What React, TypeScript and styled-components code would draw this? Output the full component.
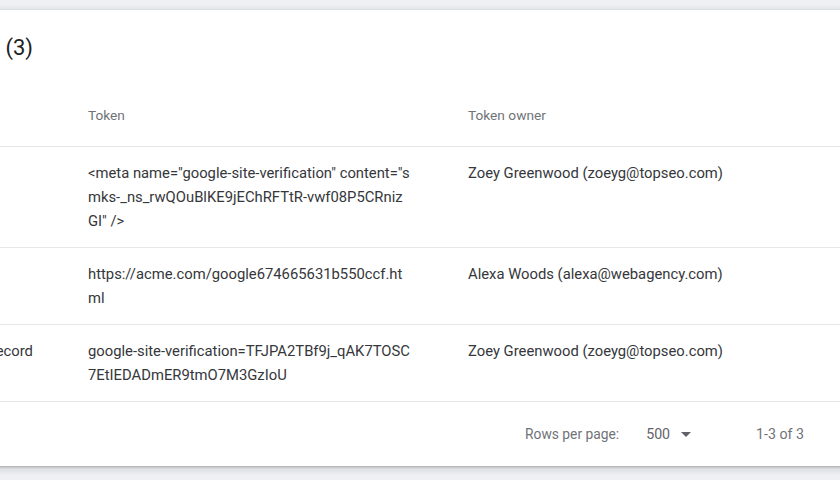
import React from "react";
import styled, { createGlobalStyle } from "styled-components";

const GlobalStyle = createGlobalStyle`
  html, body {
    margin: 0;
    padding: 0;
    background: #eef0f3;
    overflow: hidden;
    font-family: Roboto, "Liberation Sans", Arial, sans-serif;
  }
`;

const Page = styled.div`
  padding-top: 10px;
  height: 470px;
`;

const Card = styled.section`
  margin: 0 -40px 0 -96px;
  background: #fff;
  box-shadow: 0 1px 2px rgba(60, 64, 67, 0.3), 0 2px 6px 2px rgba(60, 64, 67, 0.15);
`;

const TitleBar = styled.div`
  width: 129px;
  display: flex;
  justify-content: flex-end;
  padding: 24px 0 20px;
  white-space: nowrap;
`;

const Title = styled.h2`
  margin: 0;
  font-size: 22px;
  line-height: 28px;
  font-weight: 400;
  color: #202124;
`;

const Row = styled.div<{ $head?: boolean }>`
  display: grid;
  grid-template-columns: 168px 380px 1fr;
  border-bottom: 1px solid #e6e7e8;
  padding: ${(p) => (p.$head ? "23px 0 21px" : "14px 0")};
  font-size: ${(p) => (p.$head ? "13.7px" : "14.8px")};
  line-height: ${(p) => (p.$head ? "20px" : "24px")};
  color: ${(p) => (p.$head ? "#6f7377" : "#35373b")};
`;

const MethodCell = styled.div`
  padding-left: 24px;
  white-space: nowrap;
`;

const TokenCell = styled.div`
  padding: 0 40px 0 16px;
  word-break: break-all;
`;

const OwnerCell = styled.div`
  padding-left: 16px;
`;

const Footer = styled.div`
  height: 64px;
  display: flex;
  align-items: center;
  justify-content: flex-end;
  padding-right: 76px;
  font-size: 13.8px;
  color: #6f7377;
`;

const RowsLabel = styled.span`
  margin-right: 27px;
`;

const RowsSelect = styled.div`
  display: flex;
  align-items: center;
  color: #5f6368;
  font-size: 14.2px;
  margin-right: 58px;

  svg {
    margin-left: 4px;
    fill: #5f6368;
  }
`;

const Range = styled.span`
  font-size: 14.2px;
`;

interface Token {
  method: string;
  token: string;
  owner: string;
}

const tokens: Token[] = [
  {
    method: "HTML tag",
    token: '<meta name="google-site-verification" content="smks-_ns_rwQOuBlKE9jEChRFTtR-vwf08P5CRnizGI" />',
    owner: "Zoey Greenwood (zoeyg@topseo.com)",
  },
  {
    method: "HTML file",
    token: "https://acme.com/google674665631b550ccf.html",
    owner: "Alexa Woods (alexa@webagency.com)",
  },
  {
    method: "DNS TXT record",
    token: "google-site-verification=TFJPA2TBf9j_qAK7TOSC7EtIEDADmER9tmO7M3GzIoU",
    owner: "Zoey Greenwood (zoeyg@topseo.com)",
  },
];

export default function App() {
  return (
    <Page>
      <GlobalStyle />
      <Card>
        <TitleBar>
          <Title>Verification tokens ({tokens.length})</Title>
        </TitleBar>
        <Row $head>
          <MethodCell>Method</MethodCell>
          <TokenCell>Token</TokenCell>
          <OwnerCell>Token owner</OwnerCell>
        </Row>
        {tokens.map((t) => (
          <Row key={t.token}>
            <MethodCell>{t.method}</MethodCell>
            <TokenCell>{t.token}</TokenCell>
            <OwnerCell>{t.owner}</OwnerCell>
          </Row>
        ))}
        <Footer>
          <RowsLabel>Rows per page:</RowsLabel>
          <RowsSelect>
            500
            <svg width="24" height="24" viewBox="0 0 24 24">
              <path d="M7 10l5 5 5-5z" />
            </svg>
          </RowsSelect>
          <Range>1-3 of 3</Range>
        </Footer>
      </Card>
    </Page>
  );
}
